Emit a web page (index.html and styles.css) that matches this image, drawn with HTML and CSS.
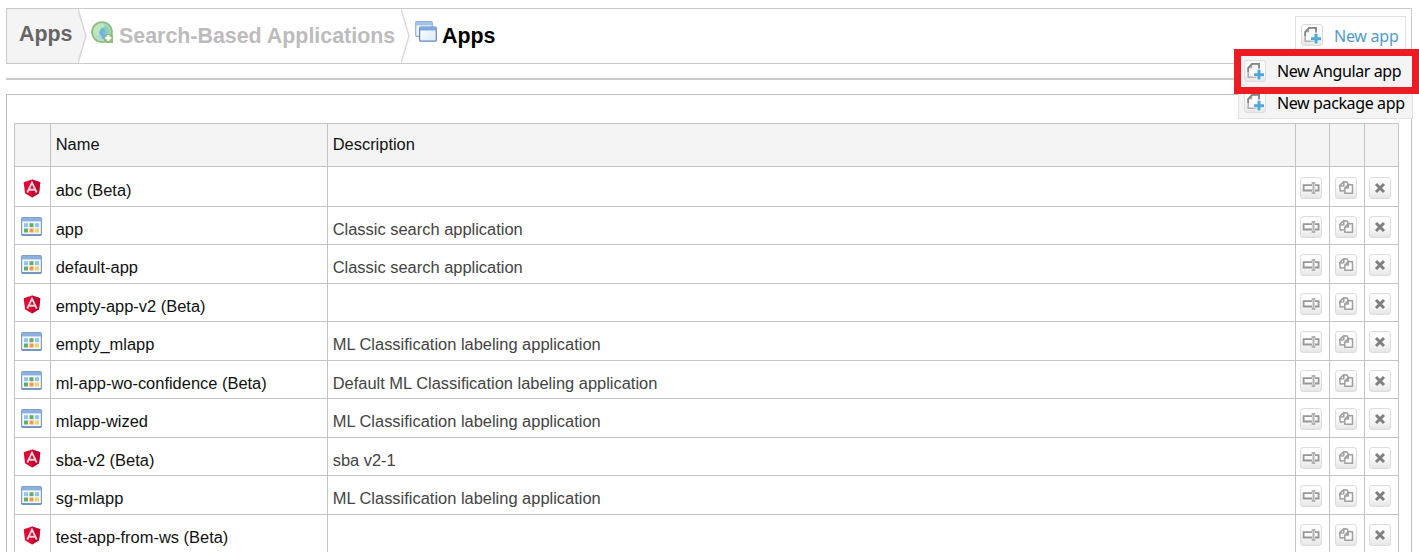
FILE: index.html
```html
<!DOCTYPE html>
<html lang="en">
<head>
<meta charset="utf-8">
<title>Apps</title>
<link rel="stylesheet" href="styles.css">
</head>
<body>
<svg class="sprite" aria-hidden="true">
  <defs>
    <linearGradient id="gBtn" x1="0" y1="0" x2="0" y2="1"><stop offset="0" stop-color="#fff"/><stop offset=".5" stop-color="#fafafa"/><stop offset="1" stop-color="#e6e6e6"/></linearGradient>
    <linearGradient id="gWin" x1="0" y1="0" x2="1" y2="1"><stop offset="0" stop-color="#fff"/><stop offset="1" stop-color="#dce8f8"/></linearGradient>
    <radialGradient id="gGlobe" cx=".6" cy=".45" r=".6"><stop offset="0" stop-color="#69b3e6"/><stop offset=".5" stop-color="#a5d4d8"/><stop offset="1" stop-color="#c3e2b6"/></radialGradient>
  </defs>
  <symbol id="button" viewBox="0 0 22 22"><rect x=".6" y=".6" width="20.8" height="20.8" rx="2.2" fill="url(#gBtn)" stroke="#dadada"/></symbol>
  <symbol id="rename" viewBox="0 0 22 22"><use href="#button"/><path d="M12 8.2H3.6v5.3H12M15 8.2h3.6v5.3H15" fill="none" stroke="#989898" stroke-width="1.8"/><path d="M11.7 6h3.6M11.7 16h3.6M13.5 5.5v11" stroke="#b2b2b2" stroke-width="2"/></symbol>
  <symbol id="copy" viewBox="0 0 22 22"><use href="#button"/><g fill="#fbfbfb" stroke="#a0a0a0" stroke-width="1.5" stroke-linejoin="round"><path d="M8.6 4.8l3.6.2.8 2v6.6l-7.8.4-.5-5.4zM8.8 5v3.8l-3.8.2"/><path d="M13.3 7.4l4.2.3v8.6h-7.7v-5.2zM13.3 7.6v3.5H10"/></g></symbol>
  <symbol id="delete" viewBox="0 0 22 22"><use href="#button"/><path d="M7 7l8 8M15 7l-8 8" stroke="#808080" stroke-width="3"/></symbol>
  <symbol id="new" viewBox="0 0 22 22"><use href="#button"/><path d="M8 3.8h7v13.4H4.2V7.8z" fill="#fafafa" stroke="#b0b0b0" stroke-width="1.6"/><path d="M4.2 8.2l4-4v4z" fill="#aaa"/><path d="M4.2 12V8l4-4.2H15V8" fill="none" stroke="#858585" stroke-width="1.7"/><path d="M15 9v11.5M9.5 14.7h11.5" stroke="#f7f7f7" stroke-width="5"/><path d="M15 9.8v9.8M10 14.7h10" stroke="#50a9da" stroke-width="3"/></symbol>
  <symbol id="angular" viewBox="0 0 18 19"><path d="M9 .4L17.3 3.3 16 14.3 9 18.4 2 14.3.7 3.3z" fill="#df0835"/><path d="M9 .4l8.3 2.9L16 14.3l-7 4.1z" fill="#c1032f"/><path d="M4.3 13.5L9 3.6l4.7 9.9M6.2 10.7h5.6" fill="none" stroke="#fff" stroke-width="1.9" opacity=".82"/></symbol>
  <symbol id="grid" viewBox="0 0 21 19"><rect x=".6" y=".7" width="19.8" height="17.6" rx="1.2" fill="#f5f9ff" stroke="#7f9fcc" stroke-width="1.2"/><path d="M1 1h19v3.4H1z" fill="#8cb1df"/><path d="M.5 17.8h20" stroke="#6689bb" stroke-width="1.3"/><path d="M3 6.2h4v4H3z" fill="#8fc6ed"/><path d="M8.5 6.2h4v4h-4z" fill="#67ad61"/><path d="M14 6.2h4v4h-4z" fill="#8fc6ed"/><path d="M3 11.5h4v4H3z" fill="#67ad61"/><path d="M8.5 11.5h4v4h-4z" fill="#f49552"/><path d="M14 11.5h4v4h-4z" fill="#f5d463"/></symbol>
</svg>

<header class="crumbs">
  <div class="crumb-root">Apps</div>
  <svg class="chevron first" viewBox="0 0 9 54"><path d="M0 0l8 27-8 27z" fill="#f4f4f4"/><path d="M0 0l8 27-8 27" fill="none" stroke="#d8d8d8" stroke-width="1.5"/></svg>
  <svg class="globe" viewBox="0 0 22 22"><circle cx="11" cy="11" r="10" fill="url(#gGlobe)" stroke="#8bbc7b" stroke-width="1.6"/><path d="M3 8c2-4 5-6 9-5l2 2-3 2-2 4-2 4c-3-1-4-3-4-7z" fill="#c4e7ba"/><path d="M13 5l5 2 1 5-3 1-2-3z" fill="#91d0a1"/><path d="M10 7l3 2-1 3 3 2-3 5-2-5-2-2z" fill="#6cb3e5"/><path d="M13 15.5l2.5-2.5H21l1 1v8h-7l-2-2z" fill="#8fbd7a"/><path d="M17.3 14v6M14.3 17h6" stroke="#fff" stroke-width="2.4"/></svg>
  <div class="crumb-muted">Search-Based Applications</div>
  <svg class="chevron second" viewBox="0 0 9 54"><path d="M0 0l8 27-8 27" fill="none" stroke="#dadada" stroke-width="1.5"/></svg>
  <svg class="windows" viewBox="0 0 22 21"><rect x=".7" y=".7" width="16.6" height="14.6" rx="1" fill="#edf4ff" stroke="#91afd6" stroke-width="1.2"/><path d="M1 1h16v3.4H1z" fill="#a4c3e9"/><rect x="4.6" y="6" width="16.7" height="14.2" rx="1" fill="url(#gWin)" stroke="#6687bd" stroke-width="1.2"/><path d="M4.5 6h17v3.5h-17z" fill="#7da9df"/></svg>
  <div class="crumb-current">Apps</div>
  <div class="new-app"><svg class="btn"><use href="#new"/></svg><span>New app</span></div>
</header>
<div class="rule"></div>
<div class="menu">
  <div class="item highlighted"><svg class="btn"><use href="#new"/></svg><span>New Angular app</span></div>
  <div class="item"><svg class="btn"><use href="#new"/></svg><span>New package app</span></div>
</div>
<main class="panel">
  <div class="table">
    <div class="row head"><div></div><div>Name</div><div>Description</div><div></div><div></div><div></div></div>
    <div class="row tall"><div><svg class="ng"><use href="#angular"/></svg></div><div>abc (Beta)</div><div></div><div><svg class="btn"><use href="#rename"/></svg></div><div><svg class="btn"><use href="#copy"/></svg></div><div><svg class="btn"><use href="#delete"/></svg></div></div>
    <div class="row short"><div><svg class="app"><use href="#grid"/></svg></div><div>app</div><div>Classic search application</div><div><svg class="btn"><use href="#rename"/></svg></div><div><svg class="btn"><use href="#copy"/></svg></div><div><svg class="btn"><use href="#delete"/></svg></div></div>
    <div class="row"><div><svg class="app"><use href="#grid"/></svg></div><div>default-app</div><div>Classic search application</div><div><svg class="btn"><use href="#rename"/></svg></div><div><svg class="btn"><use href="#copy"/></svg></div><div><svg class="btn"><use href="#delete"/></svg></div></div>
    <div class="row short"><div><svg class="ng"><use href="#angular"/></svg></div><div>empty-app-v2 (Beta)</div><div></div><div><svg class="btn"><use href="#rename"/></svg></div><div><svg class="btn"><use href="#copy"/></svg></div><div><svg class="btn"><use href="#delete"/></svg></div></div>
    <div class="row"><div><svg class="app"><use href="#grid"/></svg></div><div>empty_mlapp</div><div>ML Classification labeling application</div><div><svg class="btn"><use href="#rename"/></svg></div><div><svg class="btn"><use href="#copy"/></svg></div><div><svg class="btn"><use href="#delete"/></svg></div></div>
    <div class="row short"><div><svg class="app"><use href="#grid"/></svg></div><div>ml-app-wo-confidence (Beta)</div><div>Default ML Classification labeling application</div><div><svg class="btn"><use href="#rename"/></svg></div><div><svg class="btn"><use href="#copy"/></svg></div><div><svg class="btn"><use href="#delete"/></svg></div></div>
    <div class="row"><div><svg class="app"><use href="#grid"/></svg></div><div>mlapp-wized</div><div>ML Classification labeling application</div><div><svg class="btn"><use href="#rename"/></svg></div><div><svg class="btn"><use href="#copy"/></svg></div><div><svg class="btn"><use href="#delete"/></svg></div></div>
    <div class="row short"><div><svg class="ng"><use href="#angular"/></svg></div><div>sba-v2 (Beta)</div><div>sba v2-1</div><div><svg class="btn"><use href="#rename"/></svg></div><div><svg class="btn"><use href="#copy"/></svg></div><div><svg class="btn"><use href="#delete"/></svg></div></div>
    <div class="row"><div><svg class="app"><use href="#grid"/></svg></div><div>sg-mlapp</div><div>ML Classification labeling application</div><div><svg class="btn"><use href="#rename"/></svg></div><div><svg class="btn"><use href="#copy"/></svg></div><div><svg class="btn"><use href="#delete"/></svg></div></div>
    <div class="row"><div><svg class="ng"><use href="#angular"/></svg></div><div>test-app-from-ws (Beta)</div><div></div><div><svg class="btn"><use href="#rename"/></svg></div><div><svg class="btn"><use href="#copy"/></svg></div><div><svg class="btn"><use href="#delete"/></svg></div></div>
  </div>
</main>
</body>
</html>
```
FILE: styles.css
```css
* { box-sizing: border-box; }
html, body { height: 552px; overflow: hidden; }
body { margin: 0; padding: 8px 7px 0 6px; background: #fff; font-family: "Liberation Sans", Arial, sans-serif; font-size: 16.45px; color: #111; position: relative; }
svg { display: block; flex: none; }
.sprite { position: absolute; width: 0; height: 0; }
.btn { width: 22px; height: 22px; }
.ng { width: 18px; height: 19px; margin-top: 2px; }
.app { width: 21px; height: 19px; margin-top: 1px; }

.crumbs { display: flex; align-items: flex-start; height: 56px; border: 1px solid #c9c9c9; font-size: 21.4px; font-weight: bold; line-height: 24px; white-space: nowrap; }
.crumb-root { width: 71px; height: 54px; padding: 13px 0 0 12px; background: #f4f4f4; color: #666; }
.chevron { width: 9px; height: 54px; }
.globe { width: 22px; height: 22px; margin: 12px 0 0 4px; }
.crumb-muted { width: 288px; padding: 15px 0 0 6px; color: #bcbcbc; }
.windows { width: 22px; height: 21px; margin: 12px 0 0 5px; }
.crumb-current { padding: 15px 0 0 5px; color: #000; }
.new-app { display: flex; align-items: flex-start; width: 111px; height: 47px; margin: 7px 5px 0 auto; padding: 7px 0 0 5px; gap: 11px; border: 1px solid #e2e2e2; font: 16px/24px "Noto Sans", sans-serif; letter-spacing: -.25px; color: #519bc9; }

.rule { height: 2px; margin-top: 14px; background: #cbcbcb; }
.panel { height: 458px; margin-top: 14px; padding: 28px 12px 0 7px; border: 1px solid #bfbfbf; border-bottom: 0; overflow: hidden; }

.table { border: 1px solid #c4c4c4; width: 1385px; }
.row { display: grid; grid-template-columns: 36px 277px 968px 34px 35px 33px; height: 39px; border-bottom: 1px solid #c4c4c4; }
.row > div { padding: 12px 0 0 4.7px; border-right: 1px solid #c4c4c4; line-height: 20px; white-space: nowrap; overflow: hidden; }
.row > div:last-child { border-right: 0; }
.row > div:nth-child(3) { color: #444; }
.row > div:nth-child(1), .row > div:nth-child(n+4) { display: flex; justify-content: center; align-items: flex-start; padding: 9px 0 0; }
.row > div:nth-child(1) { padding-right: 2px; }
.row > div:nth-child(n+4) { padding-right: 3px; }
.head { height: 43px; background: #f4f4f4; }
.head > div:nth-child(2), .head > div:nth-child(3) { padding-top: 10px; color: #111; }
.tall { height: 40px; }
.tall > div:nth-child(2) { padding-top: 13px; }
.tall > div:nth-child(1), .tall > div:nth-child(n+4) { padding-top: 10px; }
.short { height: 38px; }

.menu { position: absolute; z-index: 2; top: 49px; left: 1234px; width: 185px; font: 16px/24px "Noto Sans", sans-serif; letter-spacing: -.38px; color: #000; }
.item { display: flex; align-items: flex-start; width: 175px; height: 28px; margin: -3px 0 0 4px; padding: 0 0 0 5px; gap: 11px; background: #f4f4f4; border: 1px solid #e2e2e2; border-top: 0; white-space: nowrap; }
.item.highlighted { position: relative; z-index: 1; width: 185px; height: 45px; margin: 0; padding: 4px 0 0 3px; border: 7px solid #ed1c24; gap: 11px; }
.highlighted span { margin-top: -1px; }
```
